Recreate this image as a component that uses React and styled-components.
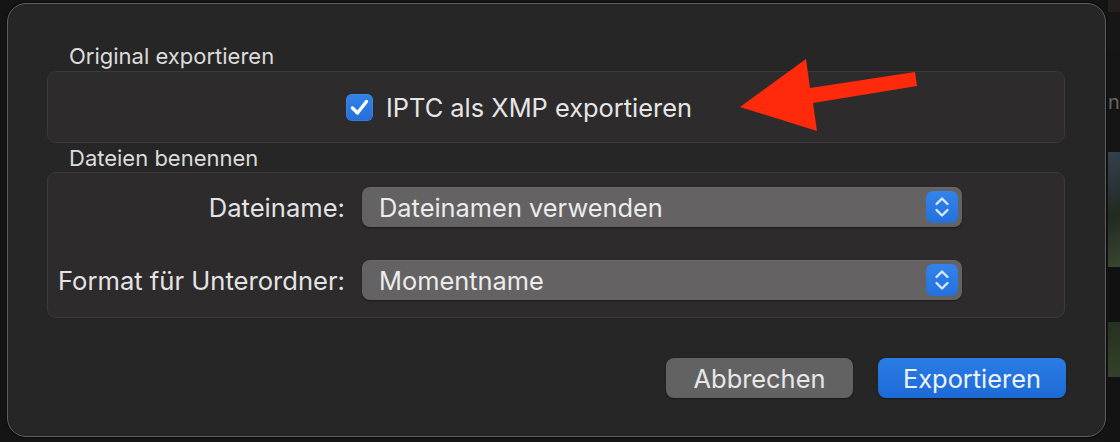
import React from "react";
import styled, { createGlobalStyle } from "styled-components";

const Global = createGlobalStyle`
  html, body { margin: 0; padding: 0; background: #141414; }
  body { font-family: Inter, "Noto Sans", "Liberation Sans", sans-serif; -webkit-font-smoothing: antialiased; }
  #root { width: 1120px; height: 442px; overflow: hidden; }
`;

const Page = styled.div`
  width: 1120px;
  height: 442px;
  display: flex;
  align-items: flex-start;
  padding: 3px 0 0 7px;
  box-sizing: border-box;
  position: relative;
  overflow: hidden;
`;

const Dialog = styled.div`
  width: 1099px;
  height: 434px;
  flex-shrink: 0;
  box-sizing: border-box;
  background: #272627;
  border: 1px solid #5f5f5f;
  border-radius: 19px;
  padding: 41px 40px 0 39px;
  display: flex;
  flex-direction: column;
  box-shadow: 0 0 0 1px #0c0c0c;
`;

const Strip = styled.div`
  flex: 1;
  height: 442px;
  margin-top: -3px;
  display: flex;
  flex-direction: column;
  padding-left: 2px;
`;

const StripBlock = styled.div`
  height: ${(p) => p.$h}px;
  background: ${(p) => p.$bg};
  color: #666;
  font-size: 20px;
  overflow: hidden;
  line-height: ${(p) => p.$h}px;
`;

const SectionLabel = styled.div`
  font-size: 22px;
  line-height: 22px;
  color: #dcdcdc;
  padding-left: 22px;
  margin-bottom: ${(p) => p.$mb}px;
`;

const GroupBox = styled.div`
  box-sizing: border-box;
  width: 1018px;
  background: #2d2b2c;
  border: 1px solid #3b393a;
  border-radius: 9px;
  margin-bottom: ${(p) => p.$mb || 0}px;
`;

const CheckRow = styled.div`
  height: 70px;
  display: flex;
  align-items: center;
  padding-left: 298px;
  gap: 13px;
`;

const CheckBox = styled.div`
  width: 27px;
  height: 27px;
  border-radius: 6px;
  background: linear-gradient(#3182ea, #2470d8);
  display: flex;
  align-items: center;
  justify-content: center;
  box-shadow: inset 0 0 0 0.5px rgba(255,255,255,0.15);
`;

const CheckText = styled.span`
  font-size: 25.4px;
  color: #e6e6e6;
`;

const FieldGrid = styled.div`
  display: grid;
  grid-template-columns: 297px 600px;
  column-gap: 17px;
  row-gap: 33px;
  padding: 14px 0 17px 0;
  align-items: center;
`;

const FieldLabel = styled.div`
  text-align: right;
  font-size: 25.6px;
  color: #e4e4e4;
  white-space: nowrap;
`;

const Select = styled.div`
  height: 40px;
  box-sizing: border-box;
  border-radius: 8px;
  background: #646263;
  box-shadow: 0 0.5px 1.5px rgba(0,0,0,0.4), inset 0 0.5px 0 rgba(255,255,255,0.08);
  display: flex;
  align-items: center;
  justify-content: space-between;
  padding: 0 4px 0 17px;
`;

const SelectText = styled.span`
  font-size: 25.4px;
  color: #ececec;
`;

const Stepper = styled.div`
  width: 32px;
  height: 32px;
  border-radius: 7px;
  background: linear-gradient(#3283ea, #2471dc);
  display: flex;
  align-items: center;
  justify-content: center;
`;

const ButtonRow = styled.div`
  display: flex;
  justify-content: flex-end;
  gap: 25px;
  margin-top: 40px;
  width: 1019px;
`;

const Button = styled.button`
  width: ${(p) => p.$w}px;
  height: 40px;
  border: none;
  border-radius: 8px;
  font-family: inherit;
  font-size: 25.4px;
  color: ${(p) => (p.$primary ? "#eef4ff" : "#e8e8e8")};
  background: ${(p) => (p.$primary ? "linear-gradient(#2b7ce6, #1d6ad6)" : "#636263")};
  box-shadow: 0 0.5px 1.5px rgba(0,0,0,0.4);
  padding: 0;
`;

const ArrowSvg = styled.svg`
  position: absolute;
  left: 0;
  top: 0;
  pointer-events: none;
`;

const Chevrons = () => (
  <svg width="32" height="32" viewBox="0 0 32 32" fill="none">
    <path d="M10.5 13 L16 7.5 L21.5 13" stroke="#dbe8ff" strokeWidth="2.3" strokeLinecap="round" strokeLinejoin="round" />
    <path d="M10.5 19 L16 24.5 L21.5 19" stroke="#dbe8ff" strokeWidth="2.3" strokeLinecap="round" strokeLinejoin="round" />
  </svg>
);

export default function App() {
  return (
    <>
      <Global />
      <Page>
        <Dialog>
          <SectionLabel $mb={4}>Original exportieren</SectionLabel>
          <GroupBox $mb={4}>
            <CheckRow>
              <CheckBox>
                <svg width="23" height="23" viewBox="0 0 23 23" fill="none">
                  <path d="M4.5 12 L9.5 17 L18.5 5.5" stroke="#fff" strokeWidth="3.4" strokeLinecap="round" strokeLinejoin="round" />
                </svg>
              </CheckBox>
              <CheckText>IPTC als XMP exportieren</CheckText>
            </CheckRow>
          </GroupBox>
          <SectionLabel $mb={3}>Dateien benennen</SectionLabel>
          <GroupBox>
            <FieldGrid>
              <FieldLabel>Dateiname:</FieldLabel>
              <Select>
                <SelectText>Dateinamen verwenden</SelectText>
                <Stepper><Chevrons /></Stepper>
              </Select>
              <FieldLabel>Format für Unterordner:</FieldLabel>
              <Select>
                <SelectText>Momentname</SelectText>
                <Stepper><Chevrons /></Stepper>
              </Select>
            </FieldGrid>
          </GroupBox>
          <ButtonRow>
            <Button $w={187}>Abbrechen</Button>
            <Button $w={188} $primary>Exportieren</Button>
          </ButtonRow>
        </Dialog>
        <Strip>
          <StripBlock $h={12} $bg="#241e1c" />
          <StripBlock $h={40} $bg="#161616" />
          <StripBlock $h={100} $bg="#141414">n</StripBlock>
          <StripBlock $h={115} $bg="linear-gradient(160deg, #34404e, #232a22 55%, #3a4630)" />
          <StripBlock $h={55} $bg="#111111" />
          <StripBlock $h={55} $bg="linear-gradient(#263220, #33402a)" />
          <StripBlock $h={65} $bg="#131313" />
        </Strip>
        <ArrowSvg width="1120" height="442" viewBox="0 0 1120 442">
          <polygon points="740,107 806,59 810,88 915,72 917,86 813,103 817,131" fill="#ff2a0c" />
        </ArrowSvg>
      </Page>
    </>
  );
}
